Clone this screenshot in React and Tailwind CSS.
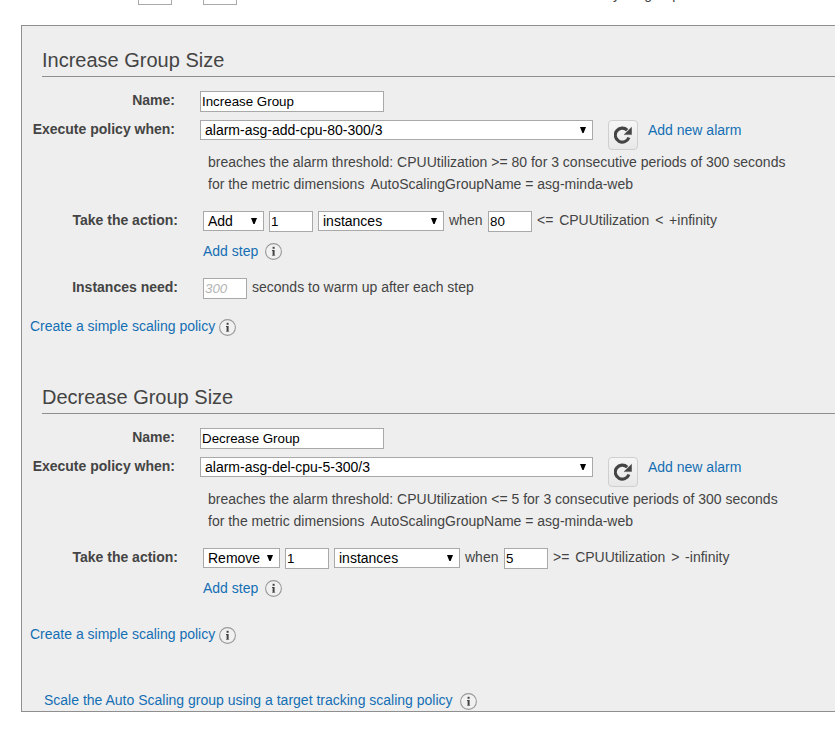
import React from "react";

function InfoIcon({ className }) {
  return (
    <svg className={`h-[17px] w-[17px] shrink-0 ${className}`} viewBox="0 0 17 17">
      <circle cx="8.5" cy="8.5" r="7.9" fill="#f1f1f1" stroke="#999" strokeWidth="1.1" />
      <rect x="7.6" y="3.8" width="2" height="2" fill="#444" />
      <path d="M7 6.9h2.6V13h-2V7.9H7z" fill="#444" />
      <path d="M7 12.2h3.2v.8H7z" fill="#888" />
    </svg>
  );
}

function RefreshIcon() {
  return (
    <svg className="h-[18px] w-[18px]" viewBox="0 0 18 18">
      <path d="M14.9 11.4A7 7 0 1 1 13.2 4.1" fill="none" stroke="#444" strokeWidth="3.1" />
      <path d="M17.6 1.2v7.4h-7.5z" fill="#444" stroke="#444" strokeWidth=".4" strokeLinejoin="round" />
    </svg>
  );
}

function Select({ className, children }) {
  return (
    <div className={`flex h-5 shrink-0 items-center justify-between border border-[#a9a9a9] bg-white pl-1 pr-[6px] leading-[18px] text-black ${className}`}>
      <span>{children}</span>
      <svg className="h-[6px] w-[6px]" viewBox="0 0 6 6">
        <path d="M0 0h6L3.6 6H2.4z" fill="#000" />
      </svg>
    </div>
  );
}

function Field({ className, children }) {
  return (
    <div className={`h-[21px] shrink-0 border border-[#a9a9a9] bg-white pl-px text-[13.33px] leading-[20px] ${className}`}>
      {children}
    </div>
  );
}

function SimpleLink({ className }) {
  return (
    <div className={`flex pl-2 ${className}`}>
      <a className="w-[189px] text-[#146eb4]">Create a simple scaling policy</a>
      <InfoIcon className="mt-[3px]" />
    </div>
  );
}

function Policy({ title, name, alarm, threshold, action, actionWidth, bound, range, children }) {
  return (
    <section>
      <h2 className="ml-5 h-[29px] border-b border-[#8f8f8f] text-[20px] leading-6">{title}</h2>
      <div className="flex h-[42px] pt-[13px]">
        <b className="w-[153px] text-right">Name:</b>
        <Field className="ml-[25px] mt-px w-[184px] text-black">{name}</Field>
      </div>
      <div className="flex h-[33px]">
        <b className="w-[153px] text-right">Execute policy when:</b>
        <Select className="ml-[25px] mt-px w-[393px]">{alarm}</Select>
        <div className="ml-[15px] mt-px flex h-[30px] w-[30px] items-center justify-center rounded border border-[#cfcfcf] bg-gradient-to-b from-[#f6f6f6] to-[#e8e8e8]">
          <RefreshIcon />
        </div>
        <a className="ml-[10px] mt-px text-[#146eb4]">Add new alarm</a>
      </div>
      <p className="-mt-px h-[58px] pl-[186px] leading-[22px]">
        breaches the alarm threshold: {threshold} for 3 consecutive periods of 300 seconds
        <br />
        for the metric dimensions<span className="ml-[6px]">AutoScalingGroupName = asg-minda-web</span>
      </p>
      <div className="mt-px flex h-[31px]">
        <b className="w-[156px] text-right">Take the action:</b>
        <Select className={`ml-[25px] mt-px ${actionWidth}`}>{action}</Select>
        <Field className="ml-[5px] mt-px w-[44px] text-black">1</Field>
        <Select className="ml-[5px] mt-px w-[126px]">instances</Select>
        <span className="ml-[5px] w-[39px]">when</span>
        <Field className="mt-px w-[44px] text-black">{bound}</Field>
        <span className="ml-[5px] whitespace-pre [word-spacing:-1px]">{range}</span>
      </div>
      <div className="flex h-[36px] pl-[181px]">
        <a className="w-[62px] text-[#146eb4]">Add step</a>
        <InfoIcon className="mt-[2px]" />
      </div>
      {children}
    </section>
  );
}

export default function App() {
  return (
    <div className="h-[737px] w-[835px] overflow-hidden bg-white font-['Liberation_Sans',Arial,sans-serif] text-[14px] leading-5 text-[#444]">
      <div className="flex h-[25px] overflow-hidden whitespace-nowrap">
        <div className="-mt-4 ml-[138px] h-[21px] w-[34px] border border-[#a9a9a9]" />
        <div className="-mt-4 ml-[31px] h-[21px] w-[34px] border border-[#a9a9a9]" />
        <span className="-mt-4 w-[443px] text-right">instances. These will be the minimum and maximum size of your group</span>
      </div>
      <main className="ml-[21px] h-[687px] whitespace-nowrap border-y border-l border-[#8f8f8f] bg-[#eee] pt-[22px]">
        <Policy
          title="Increase Group Size"
          name="Increase Group"
          alarm="alarm-asg-add-cpu-80-300/3"
          threshold="CPUUtilization >= 80"
          action="Add"
          actionWidth="w-[61px]"
          bound="80"
          range="<=  CPUUtilization  <  +infinity"
        >
          <div className="flex h-[39px]">
            <b className="w-[156px] text-right">Instances need:</b>
            <Field className="ml-[25px] mt-px w-[44px] italic text-[#b5b5b5]">300</Field>
            <span className="ml-[5px]">seconds to warm up after each step</span>
          </div>
          <SimpleLink className="h-[69px]" />
        </Policy>
        <Policy
          title="Decrease Group Size"
          name="Decrease Group"
          alarm="alarm-asg-del-cpu-5-300/3"
          threshold="CPUUtilization <= 5"
          action="Remove"
          actionWidth="w-[77px]"
          bound="5"
          range=">=  CPUUtilization  >  -infinity"
        >
          <SimpleLink className="mt-[10px] h-[66px]" />
        </Policy>
        <div className="flex pl-[22px]">
          <a className="w-[416px] text-[#146eb4]">Scale the Auto Scaling group using a target tracking scaling policy</a>
          <InfoIcon className="mt-[3px]" />
        </div>
      </main>
    </div>
  );
}
